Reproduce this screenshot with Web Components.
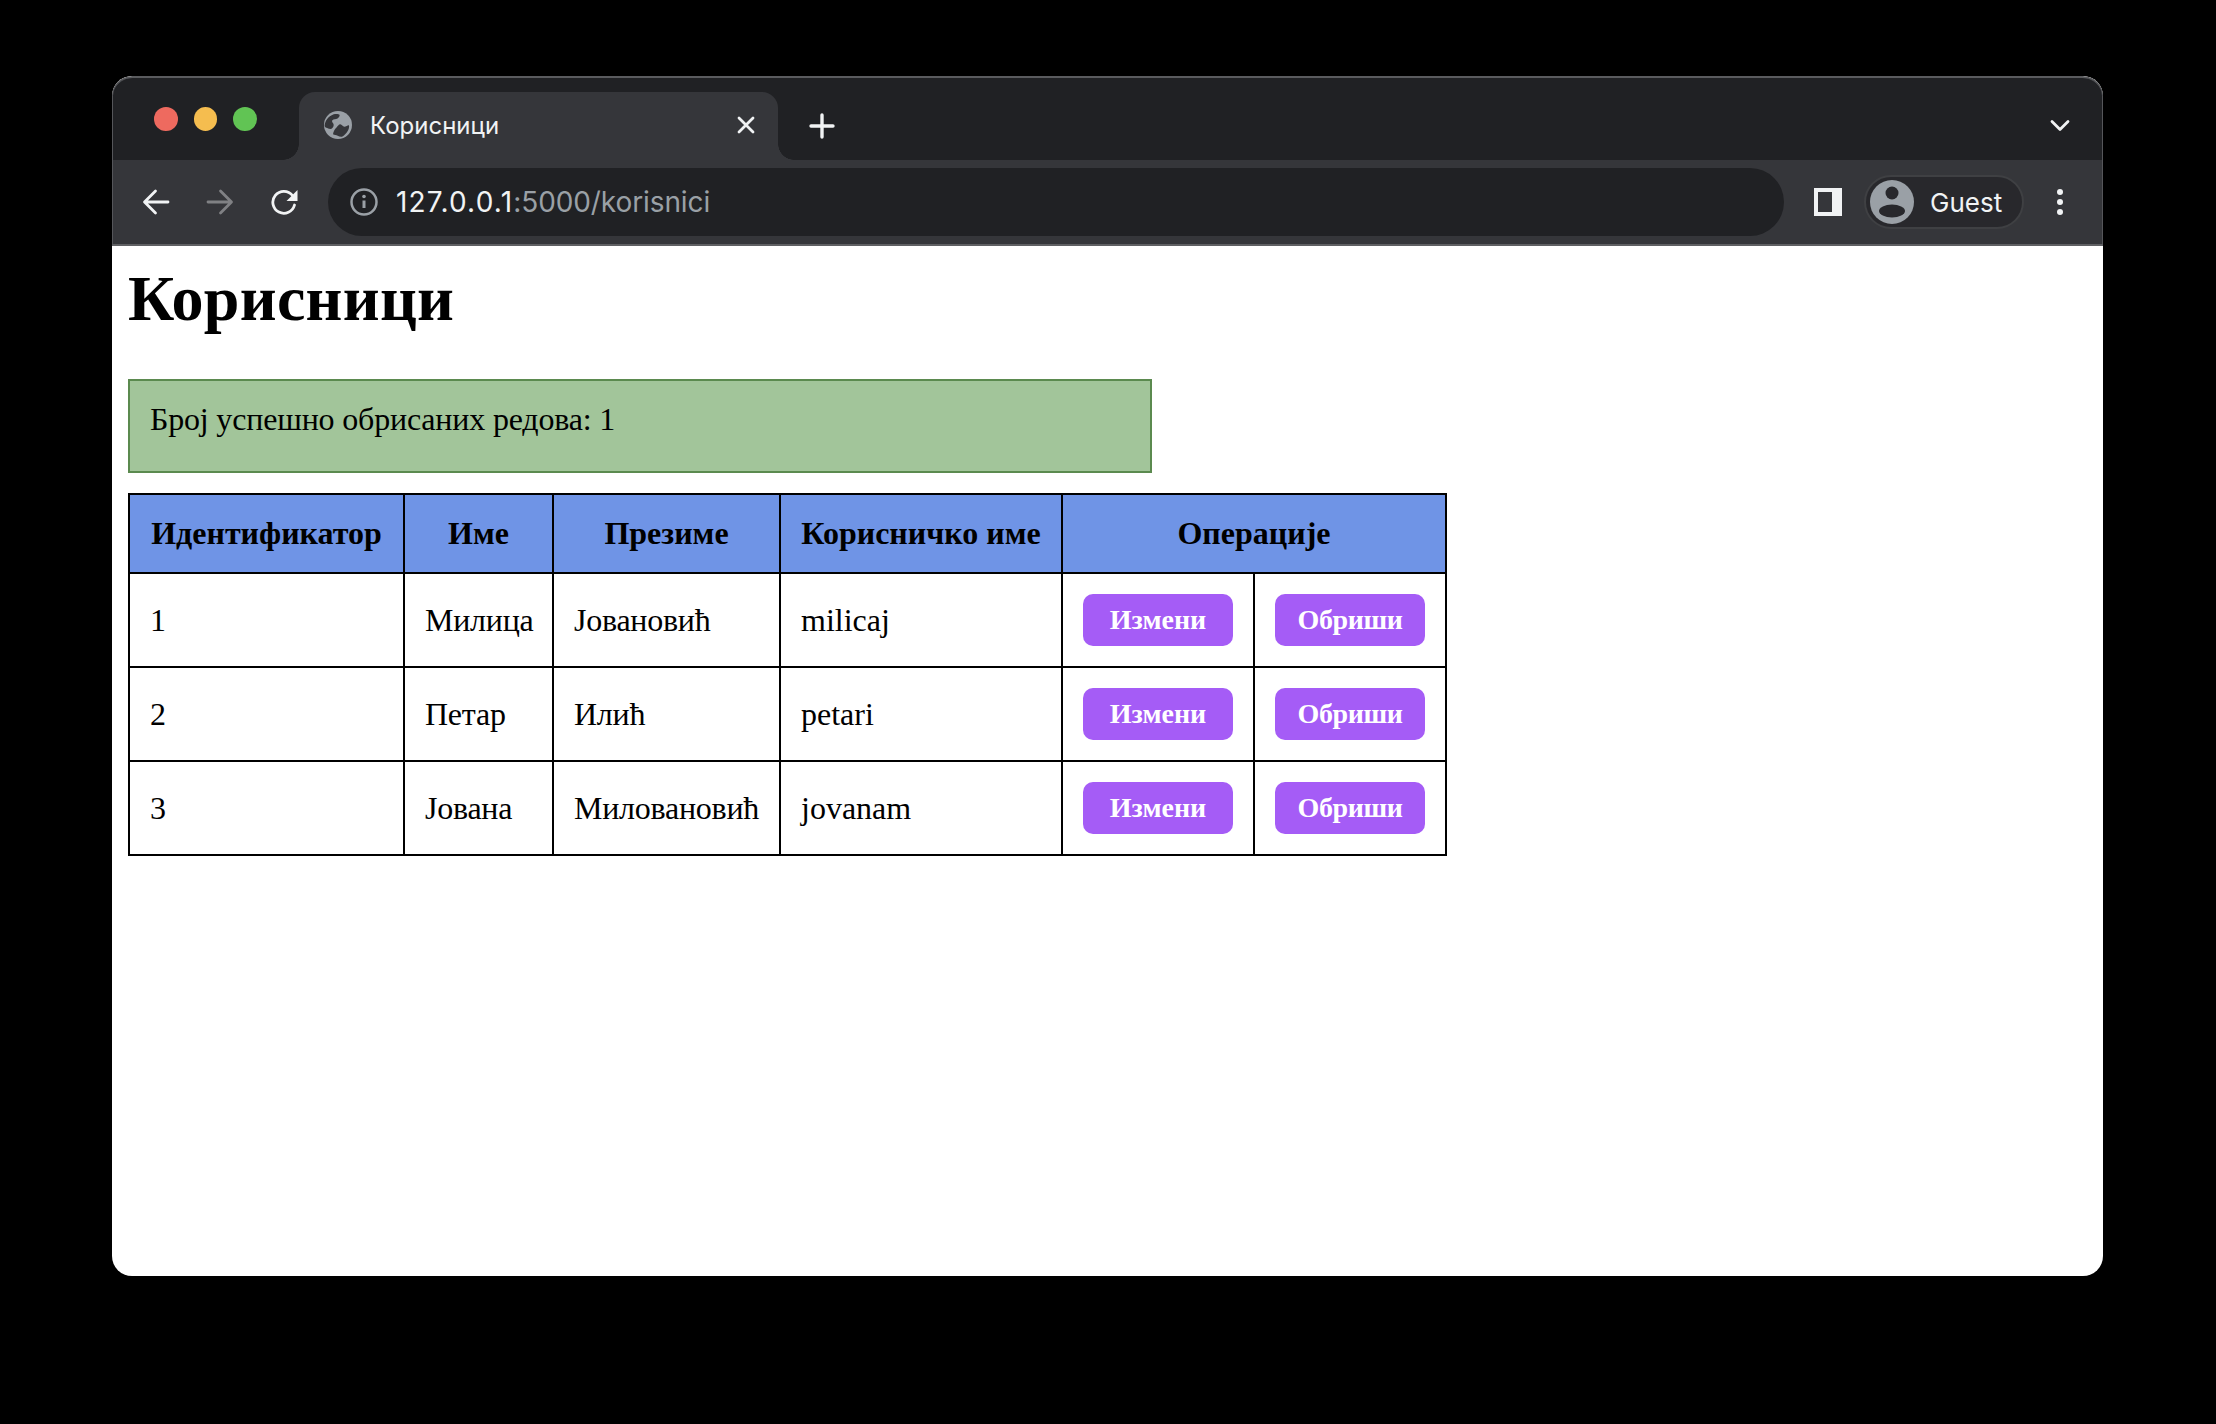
<!DOCTYPE html>
<html lang="sr">
<head>
<meta charset="utf-8">
<title>Корисници</title>
<style>
    html, body { margin: 0; background: #000; }
    body { padding: 76px 113px 148px 112px; }
</style>
</head>
<body>
<browser-window>
    <tab-strip slot="chrome" title-text="Корисници"></tab-strip>
    <browser-toolbar slot="chrome" host-name="127.0.0.1" url-rest=":5000/korisnici"></browser-toolbar>
    <page-title>Корисници</page-title>
    <flash-message>Број успешно обрисаних редова: 1</flash-message>
    <users-table></users-table>
</browser-window>

<script>
const UI_FONT = '"Inter", "Roboto", "Liberation Sans", sans-serif';

class BrowserWindow extends HTMLElement {
    constructor() {
        super();
        const shadow = this.attachShadow({ mode: 'open' });
        shadow.innerHTML = `
            <style>
                :host {
                    display: block;
                    height: 1200px;
                    background: #fff;
                    border-radius: 20px;
                    overflow: hidden;
                    color: #000;
                    font-family: "Liberation Serif", "Times New Roman", serif;
                    font-size: 32px;
                }
                .content {
                    padding: 16px;
                }
            </style>
            <slot name="chrome"></slot>
            <div class="content"><slot></slot></div>
        `;
    }
}

class TabStrip extends HTMLElement {
    constructor() {
        super();
        const shadow = this.attachShadow({ mode: 'open' });
        const title = this.getAttribute('title-text');
        shadow.innerHTML = `
            <style>
                :host {
                    display: flex;
                    align-items: flex-end;
                    box-sizing: border-box;
                    height: 84px;
                    background: #202124;
                    border-top: 2px solid #5a5b5e;
                    border-radius: 20px 20px 0 0;
                    box-shadow: inset 1px 0 #55565a, inset -1px 0 #55565a;
                    font-family: ${UI_FONT};
                }
                .lights {
                    display: flex;
                    gap: 16px;
                    align-self: flex-start;
                    padding: 29px 0 0 42px;
                    width: 145px;
                    box-sizing: border-box;
                }
                .lights span {
                    width: 24px;
                    height: 24px;
                    border-radius: 50%;
                }
                .tab {
                    position: relative;
                    display: flex;
                    align-items: center;
                    box-sizing: border-box;
                    width: 479px;
                    height: 68px;
                    margin-left: 42px;
                    padding: 0 22px 2px 25px;
                    background: #35363a;
                    border-radius: 16px 16px 0 0;
                    color: #f1f3f4;
                    font-size: 24px;
                }
                .tab::before, .tab::after {
                    content: "";
                    position: absolute;
                    bottom: 0;
                    width: 16px;
                    height: 16px;
                }
                .tab::before {
                    left: -16px;
                    background: radial-gradient(circle at 0 0, transparent 15.5px, #35363a 16px);
                }
                .tab::after {
                    right: -16px;
                    background: radial-gradient(circle at 100% 0, transparent 15.5px, #35363a 16px);
                }
                .tab .name {
                    flex: 1;
                    margin-left: 18px;
                }
                .plus {
                    margin: 0 0 21px 31px;
                }
                .spacer { flex: 1; }
                .chevron {
                    margin: 0 33px 27px 0;
                }
                svg { display: block; flex: none; }
            </style>
            <div class="lights">
                <span style="background:#ee6a5f"></span>
                <span style="background:#f5bd4f"></span>
                <span style="background:#61c454"></span>
            </div>
            <div class="tab">
                <svg width="28" height="28" viewBox="0 0 28 28">
                    <circle cx="14" cy="14" r="14" fill="#9aa0a6"/>
                    <path d="M.6 14.700C1 10 4 5.500 9.700 3.300c2.500-.7 5-.4 6 .7-.2 2-1.500 3.500-3.500 4-1.800.4-4.200.6-4.200 2 0 1.500 1.700 2.300 1.700 4 0 2.200-1.700 4-3.400 4-1.800 0-2.600-1.200-4-1.300-.9-.1-1.500-1-1.700-2z" fill="#35363a"/>
                    <path d="M9 23.300c.3-2.500 1.500-5.100 3.300-6.600 1.300-1.400 2.500-3.400 4-3.400 1.500 0 2.500 2.400 4 2.400 1.800 0 3.300-1.700 4.700-1.500.4 2-.3 4.200-1.300 5.800-1.300 2.400-3.500 4.500-5.700 5.700-1.500.3-3-.2-4.300-1-1.500-.7-3.100-.7-4.700-1.400z" fill="#35363a"/>
                </svg>
                <span class="name">${title}</span>
                <svg width="20" height="20" viewBox="0 0 20 20" fill="none" stroke="#f1f3f4" stroke-width="2.8" stroke-linecap="round">
                    <path d="M3 3l14 14M17 3L3 17"/>
                </svg>
            </div>
            <svg class="plus" width="26" height="26" viewBox="0 0 26 26" fill="none" stroke="#f1f3f4" stroke-width="3.4" stroke-linecap="round">
                <path d="M13 2v22M2 13h22"/>
            </svg>
            <div class="spacer"></div>
            <svg class="chevron" width="20" height="14" viewBox="0 0 20 14" fill="none" stroke="#f1f3f4" stroke-width="2.8" stroke-linecap="round" stroke-linejoin="round">
                <path d="M2 2.5l8 8 8-8"/>
            </svg>
        `;
    }
}

class BrowserToolbar extends HTMLElement {
    constructor() {
        super();
        const shadow = this.attachShadow({ mode: 'open' });
        const host = this.getAttribute('host-name');
        const rest = this.getAttribute('url-rest');
        shadow.innerHTML = `
            <style>
                :host {
                    display: flex;
                    align-items: center;
                    box-sizing: border-box;
                    height: 86px;
                    padding: 0 0 0 30px;
                    background: #35363a;
                    border-bottom: 2px solid #5f6063;
                    box-shadow: inset 1px 0 #55565a, inset -1px 0 #55565a;
                    font-family: ${UI_FONT};
                }
                svg { display: block; flex: none; }
                .nav {
                    display: flex;
                    align-items: center;
                    gap: 36px;
                    width: 186px;
                    flex: none;
                }
                .address {
                    display: flex;
                    align-items: center;
                    box-sizing: border-box;
                    width: 1456px;
                    height: 68px;
                    padding-left: 22px;
                    flex: none;
                    background: #202124;
                    border-radius: 34px;
                    font-size: 28px;
                    letter-spacing: -0.1px;
                    color: #9aa0a6;
                }
                .address .url { margin-left: 18px; }
                .address b { font-weight: 400; color: #f1f3f4; letter-spacing: 1.2px; }
                .side { margin-left: 30px; }
                .profile {
                    display: flex;
                    align-items: center;
                    box-sizing: border-box;
                    width: 160px;
                    height: 54px;
                    margin-left: 22px;
                    padding-left: 4px;
                    background: #28282c;
                    border: 2px solid #3f4043;
                    border-radius: 27px;
                    color: #f1f3f4;
                    font-size: 26px;
                }
                .profile span { margin-left: 16px; }
                .menu { margin-left: 32px; }
            </style>
            <div class="nav">
                <svg width="28" height="26" viewBox="0 0 28 26" fill="none" stroke="#f1f3f4" stroke-width="2.8" stroke-linecap="round" stroke-linejoin="round">
                    <path d="M26 13H3M13.5 2L2.5 13l11 11"/>
                </svg>
                <svg width="28" height="26" viewBox="0 0 28 26" fill="none" stroke="#808184" stroke-width="2.8" stroke-linecap="round" stroke-linejoin="round">
                    <path d="M2 13h23M14.5 2l11 11-11 11"/>
                </svg>
                <svg width="28" height="26" viewBox="0 0 28 26">
                    <path d="M22.5 6.5A11 11 0 1 0 24.5 16" fill="none" stroke="#f1f3f4" stroke-width="2.8" stroke-linecap="round"/>
                    <path d="M27.5 1v11h-11z" fill="#f1f3f4"/>
                </svg>
            </div>
            <div class="address">
                <svg width="28" height="28" viewBox="0 0 28 28" fill="none">
                    <circle cx="14" cy="14" r="12.5" stroke="#9aa0a6" stroke-width="2.5"/>
                    <path d="M14 12.5V20" stroke="#9aa0a6" stroke-width="3"/>
                    <circle cx="14" cy="8.5" r="1.8" fill="#9aa0a6"/>
                </svg>
                <div class="url"><b>${host}</b>${rest}</div>
            </div>
            <svg class="side" width="28" height="28" viewBox="0 0 28 28">
                <path fill-rule="evenodd" d="M0 0h28v28H0zM4 4v20h14V4z" fill="#f1f3f4"/>
            </svg>
            <div class="profile">
                <svg width="44" height="44" viewBox="0 0 44 44">
                    <circle cx="22" cy="22" r="22" fill="#9aa0a6"/>
                    <circle cx="22" cy="13" r="6.5" fill="#28282c"/>
                    <ellipse cx="22" cy="31" rx="13" ry="6.5" fill="#28282c"/>
                </svg>
                <span>Guest</span>
            </div>
            <svg class="menu" width="8" height="28" viewBox="0 0 8 28" fill="#f1f3f4">
                <circle cx="4" cy="4" r="3"/>
                <circle cx="4" cy="14" r="3"/>
                <circle cx="4" cy="24" r="3"/>
            </svg>
        `;
    }
}

class PageTitle extends HTMLElement {
    constructor() {
        super();
        const shadow = this.attachShadow({ mode: 'open' });
        shadow.innerHTML = `
            <style>
                :host {
                    display: block;
                    margin-bottom: 43px;
                    font-size: 64px;
                    font-weight: 700;
                    letter-spacing: 0.3px;
                    line-height: 74px;
                }
            </style>
            <slot></slot>
        `;
    }
}

class FlashMessage extends HTMLElement {
    constructor() {
        super();
        const shadow = this.attachShadow({ mode: 'open' });
        shadow.innerHTML = `
            <style>
                :host {
                    display: block;
                    box-sizing: border-box;
                    width: 1024px;
                    height: 94px;
                    margin-bottom: 20px;
                    padding: 20px;
                    background: #a2c59a;
                    border: 2px solid #5b8a4f;
                    letter-spacing: -0.18px;
                    line-height: 36px;
                }
            </style>
            <slot></slot>
        `;
    }
}

class ActionButton extends HTMLElement {
    constructor() {
        super();
        const shadow = this.attachShadow({ mode: 'open' });
        shadow.innerHTML = `
            <style>
                :host {
                    display: flex;
                    align-items: center;
                    justify-content: center;
                    width: 150px;
                    height: 52px;
                    background: #a55cf6;
                    border-radius: 10px;
                    color: #fff;
                    font-size: 28px;
                    font-weight: 700;
                }
            </style>
            <slot></slot>
        `;
    }
}

class UsersTable extends HTMLElement {
    constructor() {
        super();
        const shadow = this.attachShadow({ mode: 'open' });
        const users = [
            [1, 'Милица', 'Јовановић', 'milicaj'],
            [2, 'Петар', 'Илић', 'petari'],
            [3, 'Јована', 'Миловановић', 'jovanam'],
        ];
        const rows = users.map(u => `
            <tr>
                ${u.map(v => `<td class="${/[а-шА-Ш]/.test(v) ? 'cyr' : ''}">${v}</td>`).join('')}
                <td><action-button>Измени</action-button></td>
                <td><action-button style="letter-spacing:-0.4px">Обриши</action-button></td>
            </tr>
        `).join('');
        shadow.innerHTML = `
            <style>
                :host { display: block; }
                table {
                    border-collapse: collapse;
                    table-layout: fixed;
                    width: 1319px;
                    font-size: inherit;
                }
                th, td {
                    border: 2px solid #000;
                    padding: 20px;
                }
                th {
                    padding: 9px 20px;
                    height: 59px;
                    box-sizing: content-box;
                    background: #6f94e6;
                    font-weight: 700;
                }
                td { text-align: left; }
                td.cyr { letter-spacing: -0.25px; }
            </style>
            <table>
                <colgroup>
                    <col style="width:275px">
                    <col style="width:149px">
                    <col style="width:227px">
                    <col style="width:282px">
                    <col style="width:192px">
                    <col style="width:192px">
                </colgroup>
                <thead>
                    <tr>
                        <th>Идентификатор</th>
                        <th>Име</th>
                        <th>Презиме</th>
                        <th>Корисничко име</th>
                        <th colspan="2">Операције</th>
                    </tr>
                </thead>
                <tbody>${rows}</tbody>
            </table>
        `;
    }
}

customElements.define('browser-window', BrowserWindow);
customElements.define('tab-strip', TabStrip);
customElements.define('browser-toolbar', BrowserToolbar);
customElements.define('page-title', PageTitle);
customElements.define('flash-message', FlashMessage);
customElements.define('action-button', ActionButton);
customElements.define('users-table', UsersTable);
</script>
</body>
</html>
